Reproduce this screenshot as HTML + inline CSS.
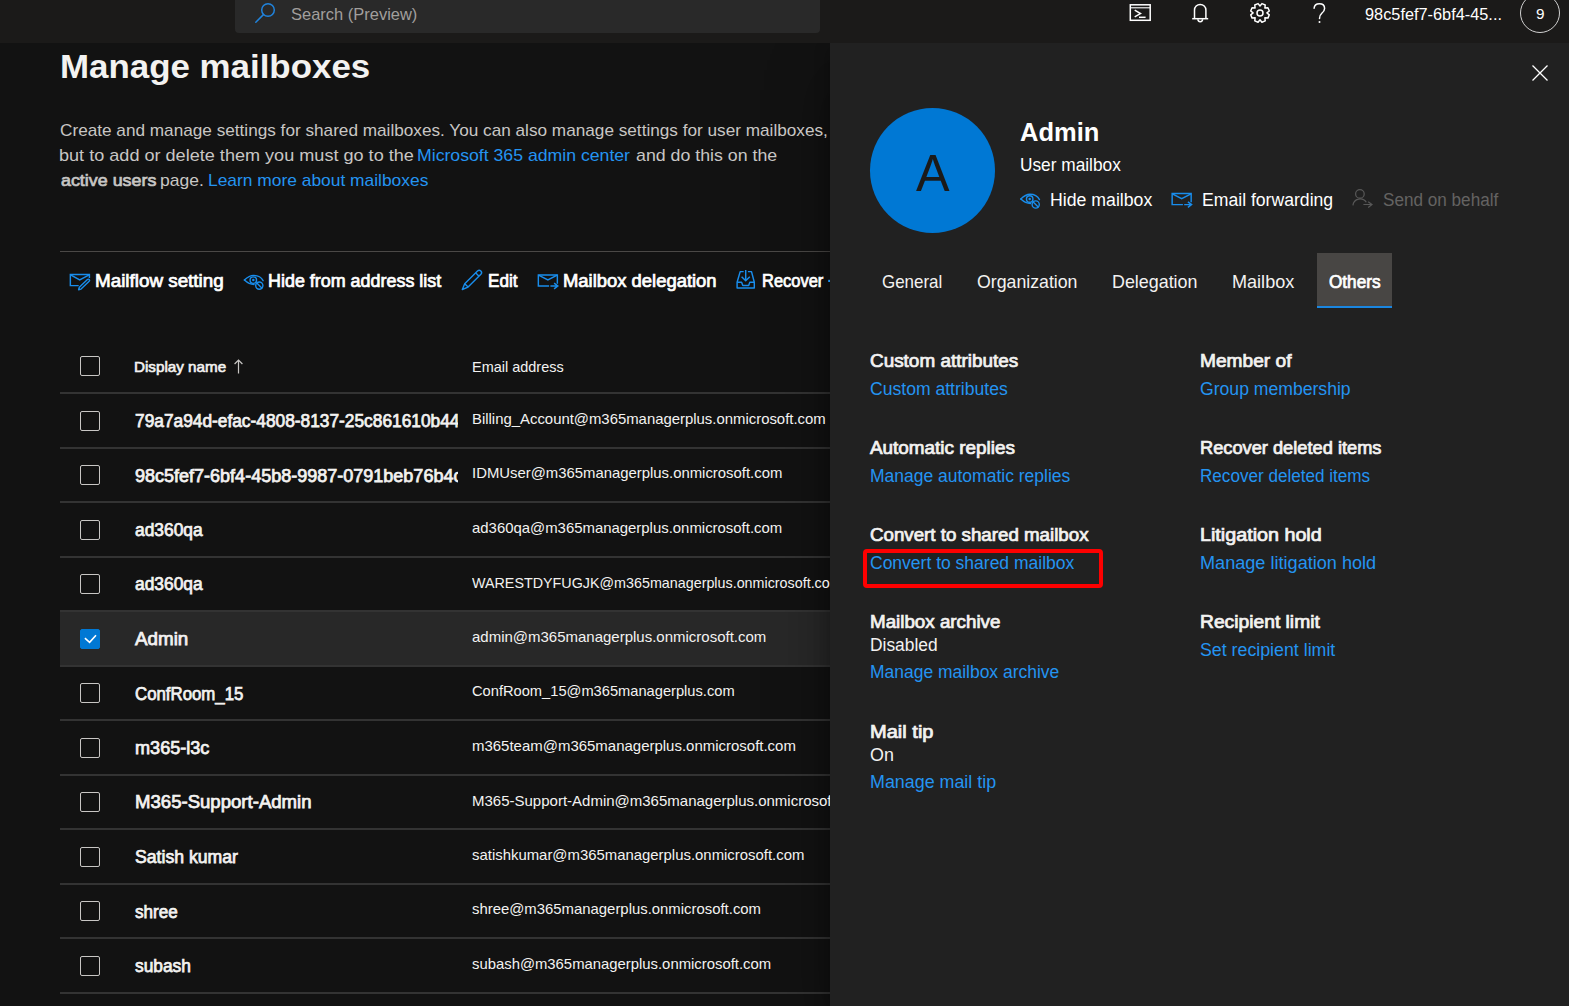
<!DOCTYPE html>
<html lang="en">
<head>
<meta charset="utf-8">
<title>Manage mailboxes - Exchange admin center</title>
<style>
html,body{margin:0;padding:0}
body{width:1569px;height:1006px;overflow:hidden;background:#121212;position:relative;
  font-family:"Liberation Sans",sans-serif;}
#topbar{position:absolute;left:0;top:0;width:1569px;height:43px;background:#1b1a19;z-index:2}
#search{position:absolute;left:235px;top:0;width:585px;height:33px;background:#292929;border-radius:0 0 4px 4px;z-index:3}
#panel{position:absolute;left:830px;top:43px;width:739px;height:963px;background:#212121;box-shadow:0 25.6px 57.6px 0 rgba(0,0,0,.35),0 4.8px 14.4px 0 rgba(0,0,0,.28)}
#selrow{position:absolute;left:60px;top:611px;width:770px;height:55px;background:#282828}
.ln{position:absolute;left:60px;width:770px;height:2px;background:#333333}
#hr{position:absolute;left:60px;top:251px;width:770px;height:1px;background:#4a4846}
.cb{position:absolute;left:80px;width:18px;height:18px;border:1px solid #c8c6c4;border-radius:2px}
.cb.on{background:#0078d4;border-color:#0078d4}
#avatar{position:absolute;left:870px;top:108px;width:125px;height:125px;border-radius:50%;background:#0078d4}
#tabsel{position:absolute;left:1317px;top:253px;width:75px;height:55px;background:#484644}
#tabline{position:absolute;left:1317px;top:305.5px;width:75px;height:2.5px;background:#1a86e0}
#redbox{position:absolute;left:862.5px;top:548.5px;width:232px;height:31px;border:4px solid #fe0000;border-radius:4px}
#me{z-index:3;position:absolute;left:1520px;top:-7px;width:38px;height:38px;border:1px solid #d0d0d0;border-radius:50%}
.t{z-index:5;position:absolute;white-space:nowrap;line-height:1;transform-origin:0 50%;display:block}
.c{position:absolute;overflow:hidden;z-index:5}
svg#ico{position:absolute;left:0;top:0;z-index:4}
</style>
</head>
<body>
<div id="topbar"></div>
<div id="search"></div>
<div id="me"></div>
<div id="hr"></div>
<div id="selrow"></div>
<div class="ln" style="top:392.0px"></div>
<div class="ln" style="top:446.5px"></div>
<div class="ln" style="top:501.0px"></div>
<div class="ln" style="top:555.5px"></div>
<div class="ln" style="top:610.0px"></div>
<div class="ln" style="top:664.5px"></div>
<div class="ln" style="top:719.0px"></div>
<div class="ln" style="top:773.5px"></div>
<div class="ln" style="top:828.0px"></div>
<div class="ln" style="top:882.5px"></div>
<div class="ln" style="top:937.0px"></div>
<div class="ln" style="top:991.5px"></div>
<div class="cb" style="top:356px"></div>
<div class="cb" style="top:411.0px"></div>
<div class="cb" style="top:465.0px"></div>
<div class="cb" style="top:520.0px"></div>
<div class="cb" style="top:574.0px"></div>
<div class="cb on" style="top:629.0px"></div>
<div class="cb" style="top:683.0px"></div>
<div class="cb" style="top:738.0px"></div>
<div class="cb" style="top:792.0px"></div>
<div class="cb" style="top:847.0px"></div>
<div class="cb" style="top:901.0px"></div>
<div class="cb" style="top:956.0px"></div>
<div id="panel"></div>
<div id="avatar"></div>
<div id="tabsel"></div>
<div id="tabline"></div>
<div id="redbox"></div>
<svg id="ico" width="1569" height="1006" viewBox="0 0 1569 1006">
<g fill="none" stroke="#2083dc" stroke-width="1.5" stroke-linecap="round"><circle cx="268" cy="10" r="6.3"/><path d="M263.4 14.6 L255.8 22.2"/></g>
<g fill="none" stroke="#fff" stroke-width="1.5"><rect x="1130.3" y="4.8" width="19.9" height="15.5"/><path d="M1130.3 7.8 H1150.2" stroke-width="1.1"/><path d="M1134.7 10.2 L1140.5 13.6 L1134.7 16.9"/><path d="M1139 17.3 H1145.6"/></g>
<g fill="none" stroke="#fff" stroke-width="1.5"><path d="M1192.2 18.7 H1208.2"/><path d="M1194.5 18.7 V10.1 a5.7 5.7 0 0 1 11.4 0 V18.7"/><path d="M1197.9 19.3 a2.35 2.35 0 0 0 4.7 0"/></g>
<g fill="none" stroke="#fff" stroke-width="1.5" stroke-linejoin="round"><path d="M1266.90 12.90 L1269.30 14.83 L1267.94 18.12 L1264.88 17.78 L1265.22 20.84 L1261.93 22.20 L1260.00 19.80 L1258.07 22.20 L1254.78 20.84 L1255.12 17.78 L1252.06 18.12 L1250.70 14.83 L1253.10 12.90 L1250.70 10.97 L1252.06 7.68 L1255.12 8.02 L1254.78 4.96 L1258.07 3.60 L1260.00 6.00 L1261.93 3.60 L1265.22 4.96 L1264.88 8.02 L1267.94 7.68 L1269.30 10.97Z"/><circle cx="1260.0" cy="12.9" r="3.0"/></g>
<g fill="none" stroke="#fff" stroke-width="1.5" stroke-linecap="round"><path d="M1314.1 8.3 C1314.3 5.2 1316.6 3.7 1319.4 3.7 C1322.5 3.7 1324.6 5.6 1324.6 8.4 C1324.6 10.6 1323.4 11.8 1321.8 13.2 C1320.2 14.6 1319.5 15.8 1319.5 18.4"/><circle cx="1319.5" cy="22" r="1" fill="#fff" stroke="none"/></g>
<path d="M1532.5 65.5 L1547.5 80.5 M1547.5 65.5 L1532.5 80.5" stroke="#fff" stroke-width="1.3" fill="none"/>
<g fill="none" stroke="#198dec" stroke-width="1.4" stroke-linecap="round" stroke-linejoin="round">
<path d="M1020.80 199.00 C1023.50 196.40 1026.50 194.30 1029.90 194.30 C1034.30 194.30 1037.90 196.60 1039.50 199.60"/>
<path d="M1020.80 199.00 C1023.50 201.50 1026.30 203.40 1030.50 203.50"/>
<circle cx="1029.70" cy="199.00" r="3.25"/>
<circle cx="1029.70" cy="199.00" r="1.25" fill="#198dec" stroke="none"/>
<circle cx="1035.70" cy="204.50" r="3.6"/>
<path d="M1033.20 202.00 L1038.20 207.00"/>
</g>
<g fill="none" stroke="#198dec" stroke-width="1.45">
<path d="M1182.90 204.60 H1172.15 V193.55 H1191.15 V202.30"/>
<path d="M1172.30 193.80 L1181.70 198.60 L1191.00 193.80"/>
<path d="M1184.20 204.60 H1191.50 M1187.90 201.80 L1191.60 204.60 L1187.90 207.40"/>
</g>
<g fill="none" stroke="#585858" stroke-width="1.2"><circle cx="1359.9" cy="193.9" r="4.3"/><path d="M1352.9 205.3 A7.3 7.3 0 0 1 1366.3 202.3"/><path d="M1363.4 204.5 H1371.8 M1368.2 201.7 L1372 204.5 L1368.2 207.5"/></g>
<g fill="none" stroke="#198dec" stroke-width="1.45"><path d="M78.7 285.6 H70.35 V274.55 H89.4 V277.9"/><path d="M70.6 274.9 L79.7 280 L89.2 274.9"/></g>
<g fill="none" stroke="#198dec" stroke-width="1.4" stroke-linejoin="round"><path d="M78.60 289.70 L79.32 287.27 L87.43 279.47 A1.25 1.25 0 0 1 89.17 281.27 L81.05 289.08 Z"/></g>
<g fill="none" stroke="#198dec" stroke-width="1.4" stroke-linecap="round" stroke-linejoin="round">
<path d="M244.40 280.10 C247.10 277.50 250.10 275.40 253.50 275.40 C257.90 275.40 261.50 277.70 263.10 280.70"/>
<path d="M244.40 280.10 C247.10 282.60 249.90 284.50 254.10 284.60"/>
<circle cx="253.30" cy="280.10" r="3.25"/>
<circle cx="253.30" cy="280.10" r="1.25" fill="#198dec" stroke="none"/>
<circle cx="259.30" cy="285.60" r="3.6"/>
<path d="M256.80 283.10 L261.80 288.10"/>
</g>
<g fill="none" stroke="#198dec" stroke-width="1.4" stroke-linejoin="round"><path d="M462.30 289.50 L464.70 283.70 L477.51 270.90 A2.4 2.4 0 0 1 480.90 274.29 L468.10 287.10 Z"/><path d="M464.70 283.70 L468.10 287.10"/><path d="M475.59 272.81 L478.99 276.21"/></g>
<g fill="none" stroke="#198dec" stroke-width="1.45">
<path d="M549.10 286.00 H538.35 V274.95 H557.35 V283.70"/>
<path d="M538.50 275.20 L547.90 280.00 L557.20 275.20"/>
<path d="M550.40 286.00 H557.70 M554.10 283.20 L557.80 286.00 L554.10 288.80"/>
</g>
<g fill="none" stroke="#198dec" stroke-width="1.45" stroke-linejoin="round"><path d="M743.7 271.6 H740.2 L737.1 282.3 V288 H754.3 V282.3 L751.5 271.6 H747.9"/><path d="M737.1 282.3 H741.6 L742.8 285.4 H748.7 L749.8 282.3 H754.3"/><path d="M745.7 270.1 V280.6 M741.6 276.7 L745.7 280.8 L749.8 276.7"/></g>
<rect x="828.2" y="279.8" width="1.8" height="2.2" fill="#198dec"/>
<path d="M238.5 360 V373.6 M234.6 364 L238.5 360 L242.4 364" stroke="#c8c6c4" stroke-width="1.2" fill="none"/>
<path d="M84.9 638.2 L89.6 642.3 L96 635.2" stroke="#fff" stroke-width="1.6" fill="none"/>
</svg>
<span class="t" style="left:290.80px;top:6.00px;font-size:17px;color:#a19f9d;transform:scaleX(0.9691)">Search (Preview)</span>
<span class="t" style="left:1365.00px;top:7.00px;font-size:15.9px;color:#ffffff;transform:scaleX(1.0267)">98c5fef7-6bf4-45...</span>
<span class="t" style="left:1535.60px;top:7.00px;font-size:14.6px;color:#ffffff;transform:scaleX(1.0500)">9</span>
<span class="t" style="left:59.65px;top:49.00px;font-size:34px;color:#f3f2f1;transform:scaleX(1.0260);font-weight:700">Manage mailboxes</span>
<span class="t" style="left:60.20px;top:122.00px;font-size:17px;color:#c8c6c4;transform:scaleX(1.0106)">Create and manage settings for shared mailboxes. You can also manage settings for user mailboxes,</span>
<span class="t" style="left:59.14px;top:147.00px;font-size:17px;color:#c8c6c4;transform:scaleX(1.0637)">but to add or delete them you must go to the</span>
<span class="t" style="left:417.16px;top:147.00px;font-size:17px;color:#2494f1;transform:scaleX(1.0388)">Microsoft 365 admin center</span>
<span class="t" style="left:635.60px;top:147.00px;font-size:17px;color:#c8c6c4;transform:scaleX(1.0445)">and do this on the</span>
<span class="t" style="left:60.59px;top:172.00px;font-size:17px;color:#c8c6c4;transform:scaleX(1.0511);-webkit-text-stroke:0.71px #c8c6c4">active users</span>
<span class="t" style="left:159.97px;top:172.00px;font-size:17px;color:#c8c6c4;transform:scaleX(1.0289)">page.</span>
<span class="t" style="left:207.58px;top:172.00px;font-size:17px;color:#2494f1;transform:scaleX(1.0226)">Learn more about mailboxes</span>
<span class="t" style="left:95.24px;top:273.00px;font-size:17.8px;color:#ffffff;transform:scaleX(1.0589);-webkit-text-stroke:0.74px #ffffff">Mailflow setting</span>
<span class="t" style="left:268.37px;top:273.00px;font-size:17.8px;color:#ffffff;transform:scaleX(1.0073);-webkit-text-stroke:0.74px #ffffff">Hide from address list</span>
<span class="t" style="left:487.80px;top:273.00px;font-size:17.8px;color:#ffffff;transform:scaleX(0.9655);-webkit-text-stroke:0.74px #ffffff">Edit</span>
<span class="t" style="left:562.95px;top:273.00px;font-size:17.8px;color:#ffffff;transform:scaleX(1.0358);-webkit-text-stroke:0.74px #ffffff">Mailbox delegation</span>
<span class="t" style="left:761.92px;top:273.00px;font-size:17.8px;color:#ffffff;transform:scaleX(0.9267);-webkit-text-stroke:0.74px #ffffff">Recover</span>
<span class="t" style="left:134.20px;top:359.00px;font-size:15px;color:#f3f2f1;transform:scaleX(1.0143);-webkit-text-stroke:0.62px #f3f2f1">Display name</span>
<span class="t" style="left:471.80px;top:359.00px;font-size:15px;color:#f3f2f1;transform:scaleX(0.9647)">Email address</span>
<div class="c" style="left:134px;top:412.00px;width:324px;height:23.4px"><span class="t" style="left:0.70px;top:0;font-size:18px;color:#f3f2f1;transform:scaleX(0.9619);-webkit-text-stroke:0.75px #f3f2f1">79a7a94d-efac-4808-8137-25c861610b44</span></div>
<div class="c" style="left:470px;top:411.00px;width:360px;height:19.5px"><span class="t" style="left:1.80px;top:0;font-size:15px;color:#f3f2f1;transform:scaleX(0.9929)">Billing_Account@m365managerplus.onmicrosoft.com</span></div>
<div class="c" style="left:134px;top:467.00px;width:324px;height:23.4px"><span class="t" style="left:0.70px;top:0;font-size:18px;color:#f3f2f1;transform:scaleX(1.0005);-webkit-text-stroke:0.75px #f3f2f1">98c5fef7-6bf4-45b8-9987-0791beb76b4c</span></div>
<div class="c" style="left:470px;top:465.00px;width:360px;height:19.5px"><span class="t" style="left:1.80px;top:0;font-size:15px;color:#f3f2f1;transform:scaleX(0.9919)">IDMUser@m365managerplus.onmicrosoft.com</span></div>
<div class="c" style="left:134px;top:521.00px;width:324px;height:23.4px"><span class="t" style="left:0.70px;top:0;font-size:18px;color:#f3f2f1;transform:scaleX(0.9659);-webkit-text-stroke:0.75px #f3f2f1">ad360qa</span></div>
<div class="c" style="left:470px;top:520.00px;width:360px;height:19.5px"><span class="t" style="left:1.80px;top:0;font-size:15px;color:#f3f2f1;transform:scaleX(0.9940)">ad360qa@m365managerplus.onmicrosoft.com</span></div>
<div class="c" style="left:134px;top:575.00px;width:324px;height:23.4px"><span class="t" style="left:0.70px;top:0;font-size:18px;color:#f3f2f1;transform:scaleX(0.9659);-webkit-text-stroke:0.75px #f3f2f1">ad360qa</span></div>
<div class="c" style="left:470px;top:575.00px;width:360px;height:19.5px"><span class="t" style="left:1.80px;top:0;font-size:15px;color:#f3f2f1;transform:scaleX(0.9545)">WARESTDYFUGJK@m365managerplus.onmicrosoft.com</span></div>
<div class="c" style="left:134px;top:630.00px;width:324px;height:23.4px"><span class="t" style="left:0.70px;top:0;font-size:18px;color:#f3f2f1;transform:scaleX(1.0440);-webkit-text-stroke:0.75px #f3f2f1">Admin</span></div>
<div class="c" style="left:470px;top:629.00px;width:360px;height:19.5px"><span class="t" style="left:1.80px;top:0;font-size:15px;color:#f3f2f1;transform:scaleX(0.9992)">admin@m365managerplus.onmicrosoft.com</span></div>
<div class="c" style="left:134px;top:685.00px;width:324px;height:23.4px"><span class="t" style="left:0.70px;top:0;font-size:18px;color:#f3f2f1;transform:scaleX(0.9336);-webkit-text-stroke:0.75px #f3f2f1">ConfRoom_15</span></div>
<div class="c" style="left:470px;top:683.00px;width:360px;height:19.5px"><span class="t" style="left:1.80px;top:0;font-size:15px;color:#f3f2f1;transform:scaleX(0.9773)">ConfRoom_15@m365managerplus.com</span></div>
<div class="c" style="left:134px;top:739.00px;width:324px;height:23.4px"><span class="t" style="left:0.70px;top:0;font-size:18px;color:#f3f2f1;transform:scaleX(1.0053);-webkit-text-stroke:0.75px #f3f2f1">m365-l3c</span></div>
<div class="c" style="left:470px;top:738.00px;width:360px;height:19.5px"><span class="t" style="left:1.80px;top:0;font-size:15px;color:#f3f2f1;transform:scaleX(0.9980)">m365team@m365managerplus.onmicrosoft.com</span></div>
<div class="c" style="left:134px;top:793.00px;width:324px;height:23.4px"><span class="t" style="left:0.70px;top:0;font-size:18px;color:#f3f2f1;transform:scaleX(1.0320);-webkit-text-stroke:0.75px #f3f2f1">M365-Support-Admin</span></div>
<div class="c" style="left:470px;top:793.00px;width:360px;height:19.5px"><span class="t" style="left:1.80px;top:0;font-size:15px;color:#f3f2f1;transform:scaleX(0.9999)">M365-Support-Admin@m365managerplus.onmicrosoft.com</span></div>
<div class="c" style="left:134px;top:848.00px;width:324px;height:23.4px"><span class="t" style="left:0.70px;top:0;font-size:18px;color:#f3f2f1;transform:scaleX(0.9799);-webkit-text-stroke:0.75px #f3f2f1">Satish kumar</span></div>
<div class="c" style="left:470px;top:847.00px;width:360px;height:19.5px"><span class="t" style="left:1.80px;top:0;font-size:15px;color:#f3f2f1;transform:scaleX(0.9936)">satishkumar@m365managerplus.onmicrosoft.com</span></div>
<div class="c" style="left:134px;top:903.00px;width:324px;height:23.4px"><span class="t" style="left:0.70px;top:0;font-size:18px;color:#f3f2f1;transform:scaleX(0.9495);-webkit-text-stroke:0.75px #f3f2f1">shree</span></div>
<div class="c" style="left:470px;top:901.00px;width:360px;height:19.5px"><span class="t" style="left:1.80px;top:0;font-size:15px;color:#f3f2f1;transform:scaleX(0.9925)">shree@m365managerplus.onmicrosoft.com</span></div>
<div class="c" style="left:134px;top:957.00px;width:324px;height:23.4px"><span class="t" style="left:0.70px;top:0;font-size:18px;color:#f3f2f1;transform:scaleX(0.9633);-webkit-text-stroke:0.75px #f3f2f1">subash</span></div>
<div class="c" style="left:470px;top:956.00px;width:360px;height:19.5px"><span class="t" style="left:1.80px;top:0;font-size:15px;color:#f3f2f1;transform:scaleX(0.9902)">subash@m365managerplus.onmicrosoft.com</span></div>
<span class="t" style="left:915.50px;top:148.00px;font-size:51.5px;color:#1b1a19;transform:scaleX(0.9771)">A</span>
<span class="t" style="left:1020.00px;top:120.00px;font-size:25.5px;color:#ffffff;transform:scaleX(0.9994);font-weight:700">Admin</span>
<span class="t" style="left:1019.72px;top:157.00px;font-size:17.7px;color:#ffffff;transform:scaleX(0.9769)">User mailbox</span>
<span class="t" style="left:1049.72px;top:191.00px;font-size:18px;color:#ffffff;transform:scaleX(0.9831)">Hide mailbox</span>
<span class="t" style="left:1201.82px;top:191.00px;font-size:18px;color:#ffffff;transform:scaleX(0.9785)">Email forwarding</span>
<span class="t" style="left:1382.50px;top:191.00px;font-size:18px;color:#646362;transform:scaleX(0.9517)">Send on behalf</span>
<span class="t" style="left:882.00px;top:274.00px;font-size:17.7px;color:#f3f2f1;transform:scaleX(0.9581)">General</span>
<span class="t" style="left:977.00px;top:274.00px;font-size:17.7px;color:#f3f2f1;transform:scaleX(1.0015)">Organization</span>
<span class="t" style="left:1112.39px;top:274.00px;font-size:17.7px;color:#f3f2f1;transform:scaleX(1.0105)">Delegation</span>
<span class="t" style="left:1232.28px;top:274.00px;font-size:17.7px;color:#f3f2f1;transform:scaleX(1.0216)">Mailbox</span>
<span class="t" style="left:1328.96px;top:274.00px;font-size:17.7px;color:#ffffff;transform:scaleX(0.9706);-webkit-text-stroke:0.74px #ffffff">Others</span>
<span class="t" style="left:869.50px;top:353.00px;font-size:17.7px;color:#f3f2f1;transform:scaleX(1.0687);-webkit-text-stroke:0.74px #f3f2f1">Custom attributes</span>
<span class="t" style="left:869.50px;top:381.00px;font-size:17.5px;color:#2494f1;transform:scaleX(1.0045)">Custom attributes</span>
<span class="t" style="left:1199.60px;top:353.00px;font-size:17.7px;color:#f3f2f1;transform:scaleX(1.0824);-webkit-text-stroke:0.74px #f3f2f1">Member of</span>
<span class="t" style="left:1199.60px;top:381.00px;font-size:17.5px;color:#2494f1;transform:scaleX(1.0057)">Group membership</span>
<span class="t" style="left:869.50px;top:440.00px;font-size:17.7px;color:#f3f2f1;transform:scaleX(1.0683);-webkit-text-stroke:0.74px #f3f2f1">Automatic replies</span>
<span class="t" style="left:869.50px;top:468.00px;font-size:17.5px;color:#2494f1;transform:scaleX(0.9993)">Manage automatic replies</span>
<span class="t" style="left:1199.60px;top:440.00px;font-size:17.7px;color:#f3f2f1;transform:scaleX(1.0311);-webkit-text-stroke:0.74px #f3f2f1">Recover deleted items</span>
<span class="t" style="left:1199.60px;top:468.00px;font-size:17.5px;color:#2494f1;transform:scaleX(0.9773)">Recover deleted items</span>
<span class="t" style="left:869.50px;top:527.00px;font-size:17.7px;color:#f3f2f1;transform:scaleX(1.0585);-webkit-text-stroke:0.74px #f3f2f1">Convert to shared mailbox</span>
<span class="t" style="left:869.50px;top:555.00px;font-size:17.5px;color:#2494f1;transform:scaleX(0.9999)">Convert to shared mailbox</span>
<span class="t" style="left:1199.60px;top:527.00px;font-size:17.7px;color:#f3f2f1;transform:scaleX(1.1151);-webkit-text-stroke:0.74px #f3f2f1">Litigation hold</span>
<span class="t" style="left:1199.60px;top:555.00px;font-size:17.5px;color:#2494f1;transform:scaleX(1.0347)">Manage litigation hold</span>
<span class="t" style="left:869.50px;top:614.00px;font-size:17.7px;color:#f3f2f1;transform:scaleX(1.0614);-webkit-text-stroke:0.74px #f3f2f1">Mailbox archive</span>
<span class="t" style="left:869.50px;top:637.00px;font-size:17.5px;color:#f3f2f1;transform:scaleX(0.9931)">Disabled</span>
<span class="t" style="left:869.50px;top:664.00px;font-size:17.5px;color:#2494f1;transform:scaleX(0.9976)">Manage mailbox archive</span>
<span class="t" style="left:1199.60px;top:614.00px;font-size:17.7px;color:#f3f2f1;transform:scaleX(1.0882);-webkit-text-stroke:0.74px #f3f2f1">Recipient limit</span>
<span class="t" style="left:1199.60px;top:642.00px;font-size:17.5px;color:#2494f1;transform:scaleX(1.0152)">Set recipient limit</span>
<span class="t" style="left:869.50px;top:724.00px;font-size:17.7px;color:#f3f2f1;transform:scaleX(1.1333);-webkit-text-stroke:0.74px #f3f2f1">Mail tip</span>
<span class="t" style="left:869.50px;top:747.00px;font-size:17.5px;color:#f3f2f1;transform:scaleX(1.0216)">On</span>
<span class="t" style="left:869.50px;top:774.00px;font-size:17.5px;color:#2494f1;transform:scaleX(1.0212)">Manage mail tip</span>
</body>
</html>
